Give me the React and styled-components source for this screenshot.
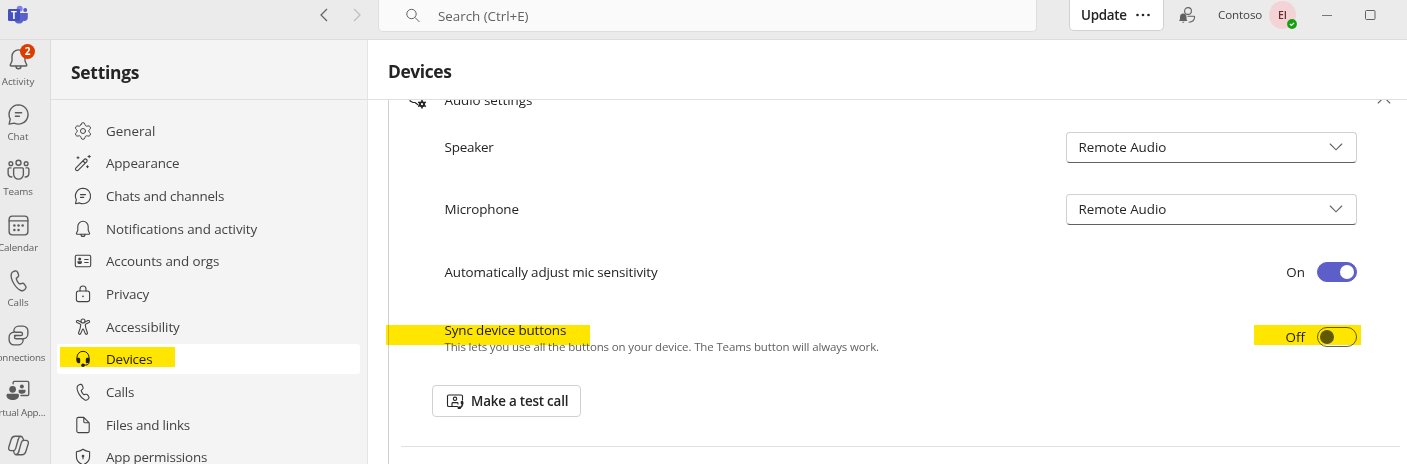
import React from "react";
import styled, { createGlobalStyle } from "styled-components";
import { Settings } from "lucide-react";

const GlobalStyle = createGlobalStyle`
  * {
    box-sizing: border-box;
  }

  body {
    margin: 0;
    overflow: hidden;
    font-family: "Open Sans", "Noto Sans", sans-serif;
    font-size: 13.4px;
    color: #242424;
  }
`;

const Window = styled.div`
  display: flex;
  flex-direction: column;
  width: 1407px;
  height: 464px;
  overflow: hidden;
  background-color: #fff;
`;

const TitleBar = styled.header`
  display: flex;
  flex: none;
  align-items: flex-start;
  height: 40px;
  background-color: #ebebeb;
  border-bottom: 1px solid #dcdcdc;
`;

const TitleItem = styled.div`
  display: flex;
  align-items: center;
  height: 30px;
  margin-left: ${props => props.$gap}px;
  color: ${props => props.$color || "#616161"};
`;

const SearchBox = styled.div`
  display: flex;
  align-items: center;
  width: 659px;
  height: 32px;
  margin-left: 16px;
  padding-left: 26px;
  gap: 17px;
  border: 1px solid #dedede;
  border-top: none;
  border-radius: 0 0 5px 5px;
  background-color: #fafafa;
  color: #616161;
  letter-spacing: -0.03px;
`;

const UpdateButton = styled.button`
  display: flex;
  align-items: center;
  width: 95px;
  height: 31px;
  margin-left: 32px;
  padding: 0 0 1px 11px;
  gap: 8px;
  border: 1px solid #d1d1d1;
  border-top: none;
  border-radius: 0 0 5px 5px;
  background-color: #fff;
  color: #242424;
  font-family: inherit;
  font-size: 13.4px;
  font-weight: 600;
  letter-spacing: -0.3px;
`;

const OrgName = styled.span`
  width: 45px;
  margin-left: 22px;
  line-height: 30px;
  font-size: 11.6px;
  letter-spacing: -0.12px;
  white-space: nowrap;
  color: #424242;
`;

const Avatar = styled.div`
  position: relative;
  width: 27px;
  height: 28px;
  margin: 1px 0 0 6px;
  border-radius: 50%;
  background-color: #f4d3d6;
  color: #6b2b33;
  font-size: 10.5px;
  font-weight: 600;
  line-height: 28px;
  text-align: center;
`;

const Presence = styled.svg`
  position: absolute;
  right: -1px;
  bottom: 0;
`;

const Body = styled.div`
  display: flex;
  flex: 1;
  min-height: 0;
`;

const Rail = styled.nav`
  display: flex;
  flex: none;
  flex-direction: column;
  width: 51px;
  overflow: hidden;
  background-color: #ebebeb;
  border-right: 1px solid #dcdcdc;
`;

const RailItem = styled.div`
  position: relative;
  display: flex;
  flex: none;
  flex-direction: column;
  align-items: center;
  width: 68px;
  height: 55.2px;
  margin-left: -16px;
  padding-top: 7px;
  color: #5c5c5c;
`;

const RailLabel = styled.span`
  margin-top: 3px;
  font-size: 9.8px;
  line-height: 14px;
  letter-spacing: ${props => props.$spacing || 0}px;
  white-space: nowrap;
`;

const Badge = styled.span`
  position: absolute;
  left: 36px;
  top: 4px;
  width: 15px;
  height: 15px;
  border-radius: 50%;
  background-color: #dd3c00;
  color: #fff;
  font-size: 10px;
  font-weight: 700;
  line-height: 15px;
  text-align: center;
`;

const Sidebar = styled.aside`
  flex: none;
  width: 317px;
  background-color: #f4f4f4;
  border-right: 1px solid #e4e4e4;
`;

const PanelHeader = styled.h1`
  flex: none;
  height: 60px;
  margin: 0;
  padding-left: 20px;
  border-bottom: 1px solid #dfdfdf;
  font-size: 17.4px;
  font-weight: 700;
  line-height: ${props => props.$line}px;
  letter-spacing: ${props => props.$spacing}px;
`;

const NavList = styled.div`
  display: flex;
  flex-direction: column;
  gap: 2.67px;
  padding: 15.7px 7px 0 6px;
`;

const NavItem = styled.div`
  position: relative;
  display: flex;
  flex: none;
  align-items: center;
  height: 30px;
  padding-left: 16px;
  gap: 13px;
  border-radius: 3px;
  background-color: ${props => (props.$selected ? "#fff" : "transparent")};
  color: ${props => (props.$selected ? "#242424" : "#424242")};
  letter-spacing: ${props => props.$spacing || 0}px;
  white-space: nowrap;
`;

const Highlight = styled.span`
  position: absolute;
  left: ${props => props.$left}px;
  top: ${props => props.$top}px;
  width: ${props => props.$width}px;
  height: 20px;
  background-color: #ffe600;
  mix-blend-mode: multiply;
`;

const Main = styled.main`
  display: flex;
  flex: 1;
  flex-direction: column;
  min-width: 0;
`;

const ScrollArea = styled.div`
  flex: 1;
  min-height: 0;
  padding-left: 20px;
  overflow: hidden;
`;

const Card = styled.section`
  height: 100%;
  border-left: 1px solid #d1d1d1;
`;

const SectionTitle = styled.div`
  display: flex;
  align-items: center;
  height: 32px;
  padding: 0 16.5px 0 19px;
  transform: translateY(-16px);
  margin-bottom: -16px;
`;

const SectionName = styled.span`
  flex: 1;
  padding-left: 16.5px;
  letter-spacing: -0.05px;
`;

const SettingRow = styled.div`
  position: relative;
  display: flex;
  align-items: center;
  justify-content: space-between;
  height: 32px;
  margin: ${props => props.$top}px 50px 0 55.5px;
`;

const RowLabel = styled.div`
  letter-spacing: ${props => props.$spacing || 0}px;
`;

const Description = styled.div`
  margin-top: 1px;
  font-size: 11.5px;
  line-height: 14px;
  letter-spacing: -0.135px;
  color: #616161;
`;

const LabelStack = styled.div`
  line-height: 18px;
`;

const Select = styled.div`
  display: flex;
  align-items: center;
  justify-content: space-between;
  width: 291px;
  height: 31px;
  padding: 0 13px 1px 11.5px;
  border: 1px solid #d1d1d1;
  border-bottom-color: #616161;
  border-radius: 4px;
  letter-spacing: -0.05px;
`;

const ToggleGroup = styled.div`
  display: flex;
  align-items: center;
  gap: 12px;
`;

const Toggle = styled.div`
  display: flex;
  align-items: center;
  justify-content: ${props => (props.$on ? "flex-end" : "flex-start")};
  width: 40px;
  height: 20px;
  padding: 0 2px;
  border: 1px solid ${props => (props.$on ? "#5b5fc7" : "#616161")};
  border-radius: 10px;
  background-color: ${props => (props.$on ? "#5b5fc7" : "transparent")};

  &::after {
    content: "";
    width: 14px;
    height: 14px;
    border-radius: 50%;
    background-color: ${props => (props.$on ? "#fff" : "#616161")};
  }
`;

const CallButton = styled.button`
  display: flex;
  align-items: center;
  width: 149px;
  height: 32px;
  margin: 32px 0 29px 43px;
  padding: 0 0 0 12px;
  gap: 6px;
  border: 1px solid #d1d1d1;
  border-radius: 4px;
  background-color: #fff;
  color: #242424;
  font-family: inherit;
  font-size: 13.4px;
  font-weight: 600;
  letter-spacing: -0.2px;
  white-space: nowrap;
`;

const Divider = styled.div`
  height: 1px;
  margin: 0 7px 0 12px;
  background-color: #e0e0e0;
`;

const Glyph = styled.svg`
  flex: none;
  display: block;
  fill: none;
  stroke: currentColor;
  stroke-width: ${props => props.$weight || 1.1};
  stroke-linecap: round;
  stroke-linejoin: round;
`;

const Icon = ({ size = 20, weight, children }) => (
  <Glyph width={size} height={size} viewBox="0 0 20 20" $weight={weight}>
    {children}
  </Glyph>
);

const chat = (
  <>
    <path d="M10 2.3a7.7 7.7 0 1 1-3.5 14.6l-4 .8.9-4A7.7 7.7 0 0 1 10 2.3Z" />
    <path d="M7.5 8.6h5M7.5 11.4h3.2" />
  </>
);

const bell = (
  <>
    <path d="M10 2.3a5.2 5.2 0 0 0-5.2 5.2v3.7l-1.4 3.2c-.1.4.1.8.6.8h12c.5 0 .7-.4.6-.8l-1.4-3.2V7.5A5.2 5.2 0 0 0 10 2.3Z" />
    <path d="M8 15.4a2 2 0 0 0 4 0" />
  </>
);

const phone = (
  <path d="m6.2 2.7 1.1-.3c.8-.2 1.6.2 1.9.9l.8 1.9c.3.7.1 1.4-.4 1.9L8.2 8.4c.1.9.5 1.7 1 2.5.5.8 1.1 1.4 1.8 1.9l1.8-.5c.7-.2 1.4 0 1.8.6l1.1 1.6c.5.7.4 1.6-.2 2.2l-.7.7c-.8.7-1.9 1-2.9.6-2.1-.8-4-2.7-5.7-5.6C4.5 9.5 3.8 6.9 4.2 4.9c.2-1.1 1-1.9 2-2.2Z" />
);

const people = (
  <>
    <circle cx="10" cy="4.6" r="2" />
    <circle cx="3.9" cy="5.3" r="1.5" />
    <circle cx="16.1" cy="5.3" r="1.5" />
    <path d="M7 8.7h6c.5 0 .9.4.9.9v4.2a3.9 3.9 0 0 1-7.8 0V9.6c0-.5.4-.9.9-.9Z" />
    <path d="M4 8.7H2.6c-.5 0-.9.4-.9.9V13c0 1.9 1.3 3 3 3M16 8.7h1.4c.5 0 .9.4.9.9V13c0 1.9-1.3 3-3 3" />
  </>
);

const calendar = (
  <>
    <rect x="2.5" y="2.5" width="15" height="15" rx="2.5" />
    <path d="M2.5 6.3h15" />
    <g fill="currentColor" stroke="none">
      <circle cx="6.7" cy="10" r="1" />
      <circle cx="10" cy="10" r="1" />
      <circle cx="13.3" cy="10" r="1" />
      <circle cx="6.7" cy="13.6" r="1" />
      <circle cx="10" cy="13.6" r="1" />
    </g>
  </>
);

const connections = (
  <>
    <path d="M13.8 12.6a3.9 3.9 0 0 0 3.7-3.9V6.4a3.9 3.9 0 0 0-3.9-3.9h-3.4a3.9 3.9 0 0 0-3.9 3.7c0 .6.4 1.2 1.200 1.200h4.400a1.300 1.300 0 0 1 0 2.600H6.800" />
    <path d="M6.200 7.400a3.9 3.9 0 0 0-3.7 3.9v2.300a3.9 3.9 0 0 0 3.9 3.9h3.400a3.9 3.900 0 0 0 3.9-3.700c0-.6-.4-1.200-1.200-1.200H8.100a1.300 1.300 0 0 1 0-2.600" />
  </>
);

const virtualAppointment = (
  <>
    <path d="M5.7 4.6V3.7c0-.6.4-1 1-1h10.5c.6 0 1 .4 1 1V13c0 .6-.4 1-1 1H12" />
    <g fill="currentColor" stroke="none">
      <circle cx="5.3" cy="9" r="2.7" />
      <path d="M1.600 12.600h7.600c.7 0 1.200.5 1.200 1.200 0 2.500-2.200 3.800-5 3.800s-5-1.300-5-3.800c0-.7.5-1.200 1.200-1.200Z" />
      <circle cx="12.7" cy="6.7" r="1.6" />
      <path d="M10.2 9.4h4.600c.5 0 .9.4.9.9 0 1.500-1.200 2.200-2.900 2.200-1.200 0-2.200-.4-2.700-1.200Z" />
    </g>
  </>
);

const copilot = (
  <>
    <path d="M9.8 5.2 7.7 12.5c-.3 1-1.1 1.6-2.1 1.6H4c-1.400 0-2.300-1.300-1.800-2.700l2-6.400c.5-1.500 1.500-2.400 3-2.400h4.400c1.100 0 1.700.7 2 1.700l.4 1.500" />
    <path d="m10.200 14.800 2.100-7.300c.3-1 1.100-1.600 2.100-1.600H16c1.400 0 2.300 1.300 1.800 2.700l-2 6.400c-.5 1.500-1.500 2.400-3 2.400H8.400c-1.100 0-1.700-.7-2-1.700L6 14.200" />
    <path d="M12.3 2.7c-1.400 0-2.100.9-2.500 2.400M7.700 17.300c1.400 0 2.100-.9 2.500-2.400" />
  </>
);

const wand = (
  <>
    <path d="M3 17.1c-.7-.7-.7-1.600 0-2.300l8.300-8.300c.7-.7 1.600-.7 2.300 0s.7 1.600 0 2.300l-8.300 8.300c-.7.7-1.600.7-2.300 0ZM10 8l2.200 2.200" />
    <path d="M5 3.700v2M4 4.700h2M16.200 2.300v2.400M15 3.500h2.400M14.500 12.700v2M13.500 13.700h2" strokeWidth="1" />
  </>
);

const idCard = (
  <>
    <rect x="2.3" y="4.3" width="15.4" height="11.4" rx="1.5" />
    <circle cx="6.7" cy="8" r="1.5" fill="currentColor" stroke="none" />
    <path d="M4.400 10.200H9c.2 2-.8 2.800-2.300 2.800s-2.500-.8-2.300-2.800Z" fill="currentColor" stroke="none" />
    <path d="M11.700 8.500h3.500M11.700 11.500h3.500" />
  </>
);

const lock = (
  <>
    <rect x="3.4" y="7" width="13.2" height="10.600" rx="2.2" />
    <path d="M7 7V5a3 3 0 0 1 6 0v2" />
    <circle cx="10" cy="12.3" r=".9" fill="currentColor" stroke="none" />
  </>
);

const figure = (
  <>
    <circle cx="10" cy="4" r="2" />
    <path d="M8 4.9 5 3.6c-1.500-.6-2.300 1.300-.9 2l3 1.400c.5.2.7.6.6 1.100l-.5 3-1.600 4.700c-.4 1.400 1.500 2.100 2.100.8l1.700-4c.2-.6 1-.6 1.200 0l1.700 4c.6 1.300 2.500.6 2.100-.8l-1.600-4.700-.5-3c-.1-.5.1-.9.6-1.100l3-1.400c1.400-.7.6-2.600-.9-2L12 4.9" />
  </>
);

const headset = (
  <>
    <path d="M4 11V8.300a6 6 0 0 1 12 0V13c0 1.900-1.200 3-3.200 3h-1.400" strokeWidth="1" />
    <g fill="currentColor" stroke="none">
      <path d="M3.500 8.700h2.200c.9 0 1.500.6 1.500 1.500v2.700c0 .8-.6 1.400-1.400 1.400-1.300 0-2.300-1.100-2.300-2.500ZM16.500 8.700h-2.200c-.9 0-1.500.6-1.500 1.500v2.700c0 .8.6 1.400 1.400 1.400 1.300 0 2.300-1.100 2.300-2.500Z" />
      <circle cx="10" cy="16.200" r="1.800" />
    </g>
  </>
);

const file = (
  <path d="M5.5 2.400h5.300l5.400 5.400v8.100c0 .9-.7 1.700-1.700 1.700h-9c-.9 0-1.700-.8-1.700-1.700V4.100c0-1 .8-1.700 1.700-1.700ZM10.800 2.600v3.800c0 .8.6 1.400 1.400 1.400H16" />
);

const shield = (
  <>
    <path d="M10 2.300c1.900 1.500 4 2.200 6.600 2.400v4.600c0 4.100-2.200 6.900-6.600 8.500-4.400-1.600-6.600-4.400-6.600-8.500V4.700C6 4.500 8.100 3.800 10 2.300Z" />
    <circle cx="10" cy="9" r="1.300" fill="currentColor" stroke="none" />
    <path d="M10 9.500v2.300" />
  </>
);

const TeamsLogo = () => (
  <svg width="22" height="20" viewBox="0 0 22 20">
    <circle cx="18.2" cy="5" r="2" fill="#5059c9" />
    <path d="M14.500 8h6.300v4.800c0 2-1.400 3.200-3.200 3.200S14.500 15 14.500 13Z" fill="#5b5fc7" />
    <circle cx="12.700" cy="3.700" r="3" fill="#7b83eb" />
    <path d="M7 8h10v5.600c0 2.900-2 5-5 5s-5-2.100-5-5Z" fill="#5a62cc" />
    <rect x="1" y="4" width="12" height="12" rx="1.200" fill="#4650bd" />
    <text x="7" y="13.500" fill="#fff" fontSize="10" fontWeight="700" textAnchor="middle">T</text>
  </svg>
);

const Chevron = ({ up }) => (
  <svg width="14" height="8" viewBox="0 0 14 8" fill="none" stroke="#616161" strokeWidth="1.1">
    <path d={up ? "M1.2 7 7 1.200 12.800 7" : "m1.200 1 5.800 5.800L12.800 1"} strokeLinecap="round" />
  </svg>
);

const railItems = [
  { label: "Activity", icon: bell, badge: "2" },
  { label: "Chat", icon: chat },
  { label: "Teams", icon: people, spacing: -0.15 },
  { label: "Calendar", icon: calendar, spacing: -0.1 },
  { label: "Calls", icon: phone },
  { label: "Connections", icon: connections, spacing: -0.2 },
  { label: "Virtual App...", icon: virtualAppointment, spacing: -0.25 },
  { label: "", icon: copilot }
];

const navItems = [
  { label: "General", settings: true, spacing: 0 },
  { label: "Appearance", icon: wand, spacing: -0.15 },
  { label: "Chats and channels", icon: chat, spacing: -0.2 },
  { label: "Notifications and activity", icon: bell, spacing: -0.08 },
  { label: "Accounts and orgs", icon: idCard, spacing: -0.1 },
  { label: "Privacy", icon: lock, spacing: -0.15 },
  { label: "Accessibility", icon: figure, spacing: -0.08 },
  { label: "Devices", icon: headset, selected: true, spacing: -0.18 },
  { label: "Calls", icon: phone, spacing: -0.15 },
  { label: "Files and links", icon: file, spacing: -0.18 },
  { label: "App permissions", icon: shield, spacing: -0.2 }
];

const WindowBar = () => (
  <TitleBar>
    <TitleItem $gap={7}>
      <TeamsLogo />
    </TitleItem>
    <TitleItem $gap={290}>
      <svg width="10" height="14" viewBox="0 0 10 14" fill="none" stroke="currentColor" strokeWidth="1.2">
        <path d="M8 1 2 7l6 6" />
      </svg>
    </TitleItem>
    <TitleItem $gap={23} $color="#bdbdbd">
      <svg width="10" height="14" viewBox="0 0 10 14" fill="none" stroke="currentColor" strokeWidth="1.2">
        <path d="m2 1 6 6-6 6" />
      </svg>
    </TitleItem>
    <SearchBox>
      <svg width="16" height="16" viewBox="0 0 16 16" fill="none" stroke="currentColor">
        <circle cx="6.5" cy="6" r="4.7" />
        <path d="m10 9.500 4.500 4.500" />
      </svg>
      Search (Ctrl+E)
    </SearchBox>
    <UpdateButton>
      Update
      <svg width="16" height="4" viewBox="0 0 16 4" fill="currentColor">
        <circle cx="2.500" cy="2" r="1.300" />
        <circle cx="8" cy="2" r="1.300" />
        <circle cx="13.500" cy="2" r="1.300" />
      </svg>
    </UpdateButton>
    <TitleItem $gap={14}>
      <svg width="18" height="18" viewBox="0 0 18 18" fill="none" stroke="currentColor" strokeWidth="1.1">
        <circle cx="10" cy="5" r="3.4" />
        <path d="M9.500 10.200h6.300c.5 0 .8.4.8.9 0 3-1.900 5-6 5.200" />
        <path d="M5.200 7.500c-2 0-3.200 1.500-3.200 3.400v2.300L1 15h8.500l-1-1.800v-2.300c0-1.900-1.300-3.400-3.300-3.400ZM4 15.800h2.500c-.3 1.200-2.200 1.200-2.500 0Z" fill="currentColor" stroke="none" />
      </svg>
    </TitleItem>
    <OrgName>Contoso</OrgName>
    <Avatar>
      EI
      <Presence width="10" height="10" viewBox="0 0 10 10">
        <circle cx="5" cy="5" r="4.9" fill="#13a10e" />
        <path d="m2.900 5 1.500 1.500 2.700-2.700" fill="none" stroke="#fff" strokeWidth="1.2" />
      </Presence>
    </Avatar>
    <TitleItem $gap={26}>
      <svg width="10" height="2" viewBox="0 0 10 2">
        <path d="M0 1.500h10" stroke="#777" />
      </svg>
    </TitleItem>
    <TitleItem $gap={33}>
      <svg width="11" height="10" viewBox="0 0 11 10">
        <rect x=".5" y=".5" width="9.500" height="9" rx="1" fill="none" stroke="#616161" />
      </svg>
    </TitleItem>
  </TitleBar>
);

const AudioSettings = () => (
  <ScrollArea>
    <Card>
      <SectionTitle>
        <Icon>
          <path d="M2.500 7.500 2 11l3 1.500h2l3 2.300" />
          <g stroke="none" fill="currentColor">
            <circle cx="14" cy="14.200" r="3" />
          </g>
          <path d="M14 10.400v7.600M10.700 12.300l6.600 3.800M10.700 16.100l6.600-3.800" strokeWidth="1.600" />
          <circle cx="14" cy="14.200" r="1.100" fill="#fff" stroke="none" />
        </Icon>
        <SectionName>Audio settings</SectionName>
        <Chevron up />
      </SectionTitle>
      <SettingRow $top={15}>
        <RowLabel $spacing={-0.2}>Speaker</RowLabel>
        <Select>
          Remote Audio
          <Chevron />
        </Select>
      </SettingRow>
      <SettingRow $top={30}>
        <RowLabel $spacing={-0.12}>Microphone</RowLabel>
        <Select>
          Remote Audio
          <Chevron />
        </Select>
      </SettingRow>
      <SettingRow $top={31}>
        <RowLabel $spacing={-0.12}>Automatically adjust mic sensitivity</RowLabel>
        <ToggleGroup>
          On
          <Toggle $on />
        </ToggleGroup>
      </SettingRow>
      <SettingRow $top={33}>
        <LabelStack>
          <RowLabel $spacing={-0.12}>Sync device buttons</RowLabel>
          <Description>
            This lets you use all the buttons on your device. The Teams button will always work.
          </Description>
        </LabelStack>
        <ToggleGroup>
          Off
          <Toggle />
        </ToggleGroup>
        <Highlight $left={-58.5} $top={4} $width={204} />
        <Highlight $left={809.5} $top={4} $width={107} />
      </SettingRow>
      <CallButton>
        <Icon>
          <path d="M12.500 15.500H3.800c-.7 0-1.300-.6-1.300-1.300V5.300c0-.7.6-1.300 1.300-1.300h12.400c.7 0 1.300.6 1.300 1.300V9" />
          <circle cx="10" cy="7.800" r="1.700" />
          <path d="M7 15v-2.500c0-.5.4-.9.9-.9h4.200c.5 0 .9.4.9.9v.5" />
          <path d="M17.300 10.800c1 3-.500 5.700-3.600 6.300" strokeWidth="1.500" />
          <path d="M17 11v1.200M13.800 16.700h1" strokeWidth="2.600" />
        </Icon>
        Make a test call
      </CallButton>
      <Divider />
    </Card>
  </ScrollArea>
);

class App extends React.Component {
  renderRail() {
    return railItems.map(item => (
      <RailItem key={item.label}>
        <Icon size={25} weight={1.1}>{item.icon}</Icon>
        <RailLabel $spacing={item.spacing}>{item.label}</RailLabel>
        {item.badge && <Badge>{item.badge}</Badge>}
      </RailItem>
    ));
  }

  renderNav() {
    return navItems.map(({ label, icon, settings, selected, spacing }) => (
      <NavItem key={label} $selected={selected} $spacing={spacing}>
        {settings ? <Settings size={20} strokeWidth={1.2} /> : <Icon>{icon}</Icon>}
        {label}
        {selected && <Highlight $left={3} $top={3} $width={115} />}
      </NavItem>
    ));
  }

  render() {
    return (
      <Window>
        <GlobalStyle />
        <WindowBar />
        <Body>
          <Rail>{this.renderRail()}</Rail>
          <Sidebar>
            <PanelHeader $spacing={-0.25} $line={64}>Settings</PanelHeader>
            <NavList>{this.renderNav()}</NavList>
          </Sidebar>
          <Main>
            <PanelHeader $spacing={-0.4} $line={63}>Devices</PanelHeader>
            <AudioSettings />
          </Main>
        </Body>
      </Window>
    );
  }
}

export default App;
